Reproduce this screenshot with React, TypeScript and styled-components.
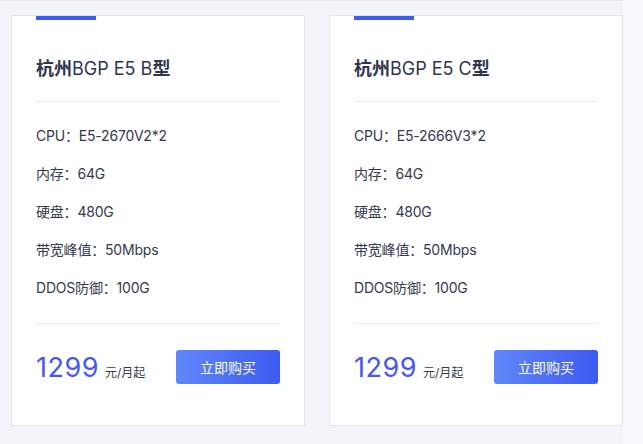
import styled, { createGlobalStyle } from "styled-components";

const GlobalStyle = createGlobalStyle`
  html, body {
    margin: 0;
    padding: 0;
    background: #f8f9fe;
  }
  body {
    font-family: Inter, "Noto Sans CJK SC", "Noto Sans", sans-serif;
  }
`;

interface Plan {
  name: string;
  variant: string;
  cpu: string;
  ram: string;
  disk: string;
  bandwidth: string;
  ddos: string;
  price: number;
}

const plans: Plan[] = [
  {
    name: "杭州",
    variant: "BGP E5 B",
    cpu: "E5-2670V2*2",
    ram: "64G",
    disk: "480G",
    bandwidth: "50Mbps",
    ddos: "100G",
    price: 1299,
  },
  {
    name: "杭州",
    variant: "BGP E5 C",
    cpu: "E5-2666V3*2",
    ram: "64G",
    disk: "480G",
    bandwidth: "50Mbps",
    ddos: "100G",
    price: 1299,
  },
];

function App() {
  return (
    <>
      <GlobalStyle />
      <Page>
        <Grid>
          {plans.map((plan) => (
            <Card key={plan.variant}>
              <Tab />
              <Title>
                <b>{plan.name}</b>
                <span>{plan.variant}</span>
                <b>型</b>
              </Title>
              <Specs>
                <Spec>CPU：{plan.cpu}</Spec>
                <Spec>内存：{plan.ram}</Spec>
                <Spec>硬盘：{plan.disk}</Spec>
                <Spec>带宽峰值：{plan.bandwidth}</Spec>
                <Spec>DDOS防御：{plan.ddos}</Spec>
              </Specs>
              <Footer>
                <Price>
                  <Amount>{plan.price}</Amount>
                  <Unit>元/月起</Unit>
                </Price>
                <BuyButton>立即购买</BuyButton>
              </Footer>
            </Card>
          ))}
        </Grid>
      </Page>
    </>
  );
}

export default App;

const Page = styled.div`
  width: 623px;
  height: 444px;
  box-sizing: border-box;
  background: #f4f5fa;
  border-top: 1px solid #e4e7f0;
  padding: 14px 0 0 11px;
`;

const Grid = styled.div`
  display: grid;
  grid-template-columns: 294px 294px;
  gap: 24px;
`;

const Card = styled.div`
  background: #fff;
  border: 1px solid #e3e6ef;
  padding: 0 24px 41px;
  display: flex;
  flex-direction: column;
`;

const Tab = styled.div`
  width: 60px;
  height: 4px;
  background: #3d5af1;
`;

const Title = styled.h3`
  margin: 37px 0 0;
  padding-bottom: 20px;
  border-bottom: 1px solid #e9ecf6;
  font-size: 18px;
  line-height: 24px;
  color: #2f3650;
  font-weight: 400;

  b {
    font-weight: 700;
  }
`;

const Specs = styled.ul`
  list-style: none;
  margin: 0;
  padding: 15px 0 16px;
  border-bottom: 1px solid #e9ecf6;
`;

const Spec = styled.li`
  font-size: 14px;
  line-height: 38px;
  color: #333a4d;
  letter-spacing: -0.2px;
`;

const Footer = styled.div`
  display: flex;
  justify-content: space-between;
  align-items: center;
  margin-top: 26px;
`;

const Price = styled.div`
  display: flex;
  align-items: baseline;
  gap: 6px;
`;

const Amount = styled.span`
  font-size: 27px;
  font-weight: 400;
  color: #4658f0;
  letter-spacing: 0.5px;
`;

const Unit = styled.span`
  font-size: 12px;
  color: #333a4d;
`;

const BuyButton = styled.button`
  width: 104px;
  height: 34px;
  border: none;
  border-radius: 3px;
  background: linear-gradient(90deg, #5f88f9, #3d5af1);
  color: #fff;
  font-family: inherit;
  font-size: 14px;
  cursor: pointer;
`;
